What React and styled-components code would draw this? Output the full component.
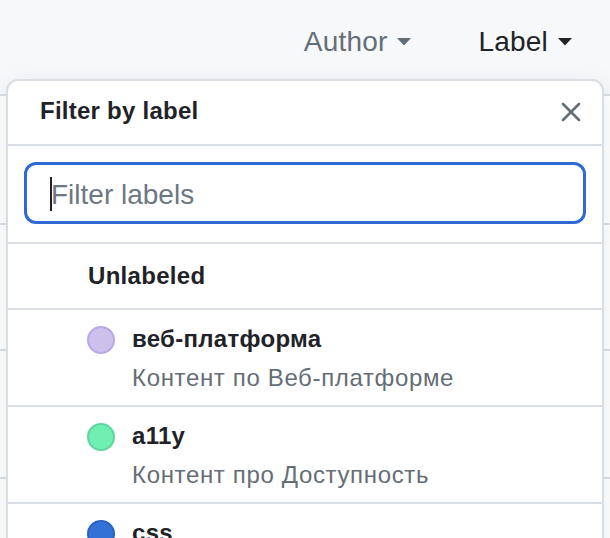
import React from 'react';
import styled, { createGlobalStyle } from 'styled-components';

const GlobalStyle = createGlobalStyle`
  body {
    margin: 0;
    background: #f6f8fa;
    font-family: "Liberation Sans", Arial, sans-serif;
    color: #1f2328;
  }
`;

const Page = styled.div`
  position: relative;
  width: 610px;
  height: 538px;
  overflow: hidden;
`;

const TopBar = styled.div`
  height: 94px;
  box-sizing: border-box;
  display: flex;
  justify-content: flex-end;
  align-items: flex-start;
  gap: 67px;
  padding: 25px 38px 0 0;
`;

const FilterButton = styled.div`
  display: flex;
  align-items: center;
  gap: 10px;
  font-size: 28px;
  line-height: 34px;
  letter-spacing: 0.2px;
  color: ${p => (p.$active ? '#1f2328' : '#656d76')};
`;

const IssueList = styled.div`
  background: #fff;
  border-top: 2px solid #d8dee4;
`;

const IssueRow = styled.div`
  height: ${p => p.$h}px;
  border-bottom: 2px solid #d8dee4;
`;

const Menu = styled.div`
  position: absolute;
  top: 79px;
  left: 6px;
  width: 598px;
  height: 500px;
  box-sizing: border-box;
  background: #fff;
  border: 2px solid #d8dee4;
  border-radius: 12px;
  box-shadow: 0 8px 24px rgba(140, 149, 159, 0.2);
  overflow: hidden;
`;

const MenuHeader = styled.div`
  height: 65px;
  box-sizing: border-box;
  display: flex;
  align-items: center;
  justify-content: space-between;
  padding: 0 21px 4px 32px;
  border-bottom: 2px solid #d8dee4;
`;

const MenuTitle = styled.span`
  font-size: 24px;
  line-height: 30px;
  font-weight: 700;
  letter-spacing: 0.25px;
`;

const CloseButton = styled.button`
  display: flex;
  padding: 0;
  border: none;
  background: none;
  margin-top: 2px;
`;

const FilterSection = styled.div`
  padding: 16px 16px 18px;
  border-bottom: 2px solid #d8dee4;
`;

const InputBox = styled.label`
  display: flex;
  align-items: center;
  height: 62px;
  box-sizing: border-box;
  border: 3px solid #2f69d3;
  border-radius: 12px;
  padding: 3px 0 0 23px;
`;

const Caret = styled.span`
  width: 2px;
  height: 34px;
  background: #1f2328;
  margin: -2px -1px 0 0;
  flex-shrink: 0;
`;

const FilterInput = styled.input`
  flex: 1;
  border: none;
  outline: none;
  padding: 0;
  font-family: inherit;
  font-size: 28px;
  color: #1f2328;
  background: transparent;
  &::placeholder {
    color: #6e7781;
  }
`;

const Row = styled.div`
  display: flex;
  align-items: flex-start;
  gap: 17px;
  box-sizing: border-box;
  height: ${p => p.$h}px;
  padding: ${p => p.$pt}px 0 0 ${p => p.$pl}px;
  border-bottom: 2px solid #d8dee4;
`;

const Dot = styled.span`
  width: 28px;
  height: 28px;
  box-sizing: border-box;
  border-radius: 50%;
  margin-top: 2px;
  flex-shrink: 0;
  background: ${p => p.$color};
  border: 2px solid ${p => p.$border};
`;

const LabelText = styled.div`
  display: flex;
  flex-direction: column;
  gap: 9px;
`;

const LabelName = styled.span`
  font-size: 24px;
  line-height: 30px;
  font-weight: 700;
  letter-spacing: 0.3px;
`;

const LabelDesc = styled.span`
  font-size: 24px;
  line-height: 30px;
  letter-spacing: 0.65px;
  color: #656d76;
`;

const Triangle = ({ color }) => (
  <svg width="14" height="8" viewBox="0 0 14 8">
    <path d="M0 0h14L7 7.5z" fill={color} />
  </svg>
);

const CloseIcon = () => (
  <svg width="20" height="20" viewBox="0 0 20 20">
    <path d="M2 2l16 16M18 2L2 18" stroke="#656d76" strokeWidth="2.6" strokeLinecap="round" />
  </svg>
);

const labels = [
  { name: 'веб-платформа', desc: 'Контент по Веб-платформе', color: '#ccc0ec', border: '#b9a9e0' },
  { name: 'a11y', desc: 'Контент про Доступность', color: '#70efb2', border: '#5dd69c' },
  { name: 'css', color: '#3371d6', border: '#2a62c0' },
];

export default function App() {
  return (
    <Page>
      <GlobalStyle />
      <TopBar>
        <FilterButton>
          Author <Triangle color="#656d76" />
        </FilterButton>
        <FilterButton $active>
          Label <Triangle color="#1f2328" />
        </FilterButton>
      </TopBar>
      <IssueList>
        <IssueRow $h={127} />
        <IssueRow $h={124} />
        <IssueRow $h={126} />
        <IssueRow $h={126} />
      </IssueList>

      <Menu>
        <MenuHeader>
          <MenuTitle>Filter by label</MenuTitle>
          <CloseButton aria-label="Close">
            <CloseIcon />
          </CloseButton>
        </MenuHeader>
        <FilterSection>
          <InputBox>
            <Caret />
            <FilterInput placeholder="Filter labels" />
          </InputBox>
        </FilterSection>
        <Row $h={66} $pt={17} $pl={80}>
          <LabelName>Unlabeled</LabelName>
        </Row>
        {labels.map(l => (
          <Row key={l.name} $h={97} $pt={14} $pl={79}>
            <Dot $color={l.color} $border={l.border} />
            <LabelText>
              <LabelName>{l.name}</LabelName>
              {l.desc && <LabelDesc>{l.desc}</LabelDesc>}
            </LabelText>
          </Row>
        ))}
      </Menu>
    </Page>
  );
}
